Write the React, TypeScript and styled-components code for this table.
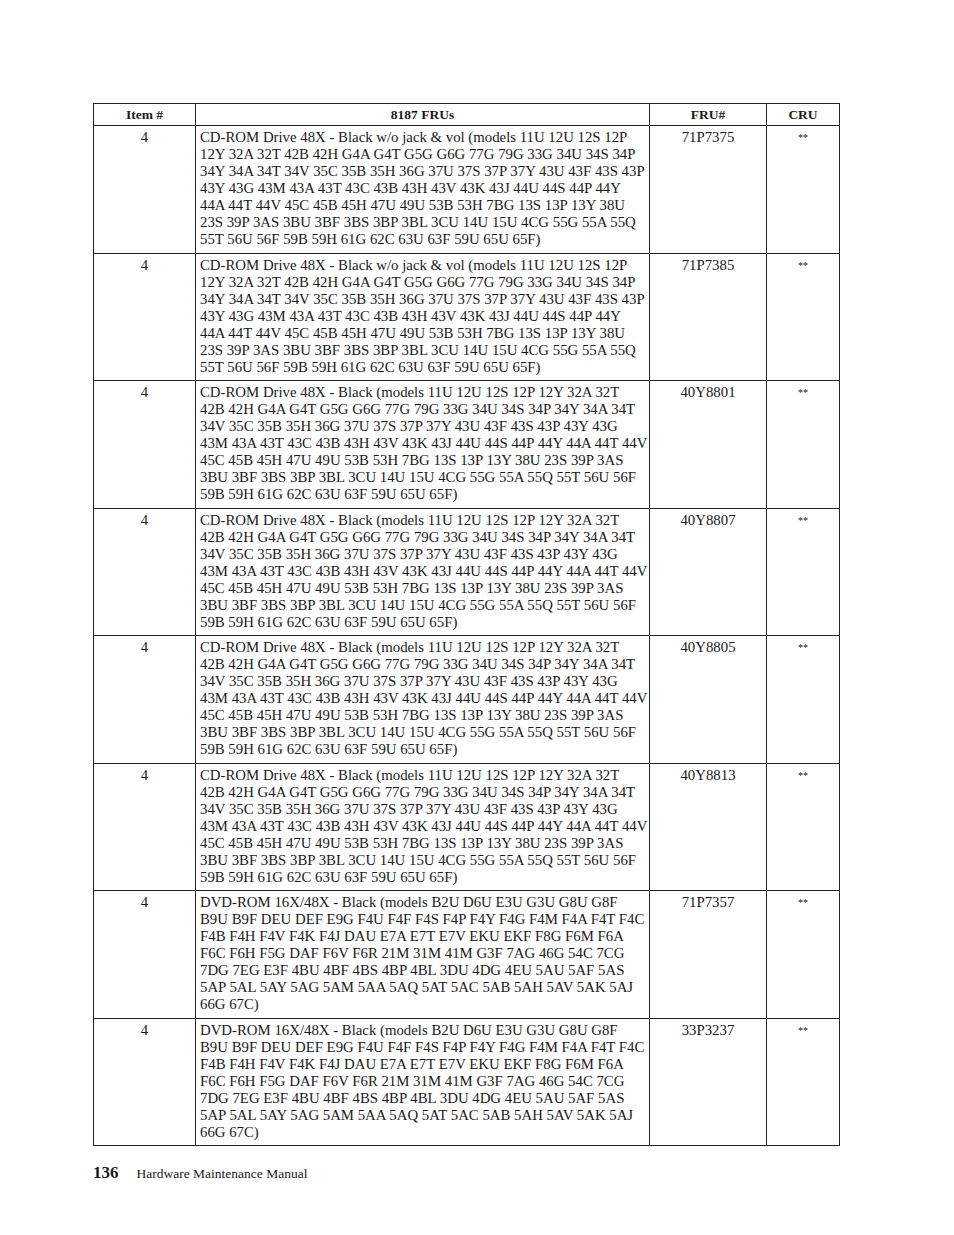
import { FC } from 'react';
import styled, { createGlobalStyle } from 'styled-components';

const GlobalStyle = createGlobalStyle`
  html, body {
    margin: 0;
    padding: 0;
    background: #fff;
  }
  body {
    font-family: "Liberation Serif", "Times New Roman", serif;
    color: #1a1a1a;
  }
`;

const Page = styled.div`
  width: 954px;
  height: 1235px;
  box-sizing: border-box;
  padding: 103px 0 0 93px;
`;

const Table = styled.table`
  border-collapse: collapse;
  table-layout: fixed;
  width: 747px;
`;

const HeadCell = styled.th<{ $w: number }>`
  box-sizing: border-box;
  width: ${(p) => p.$w}px;
  border: 1px solid #222;
  height: 22px;
  padding: 0 4px;
  font-size: 13.5px;
  font-weight: bold;
  text-align: center;
  vertical-align: middle;
  line-height: 16px;
`;

const Cell = styled.td<{ $center?: boolean }>`
  box-sizing: border-box;
  border: 1px solid #222;
  padding: 3px 4px 4.5px 4px;
  vertical-align: top;
  font-size: 14.8px;
  line-height: 17px;
  overflow: hidden;
  text-align: ${(p) => (p.$center ? 'center' : 'left')};
`;

const Line = styled.div`
  white-space: nowrap;
`;

const Stars = styled.span`
  font-size: 10px;
  line-height: 17px;
  vertical-align: top;
`;

const Footer = styled.div`
  display: flex;
  align-items: baseline;
  gap: 18px;
  margin-top: 17px;
`;

const PageNum = styled.span`
  font-size: 17px;
  font-weight: bold;
`;

const Title = styled.span`
  font-size: 13.5px;
`;

const cdA = [
  'CD-ROM Drive 48X - Black w/o jack & vol (models 11U 12U 12S 12P',
  '12Y 32A 32T 42B 42H G4A G4T G5G G6G 77G 79G 33G 34U 34S 34P',
  '34Y 34A 34T 34V 35C 35B 35H 36G 37U 37S 37P 37Y 43U 43F 43S 43P',
  '43Y 43G 43M 43A 43T 43C 43B 43H 43V 43K 43J 44U 44S 44P 44Y',
  '44A 44T 44V 45C 45B 45H 47U 49U 53B 53H 7BG 13S 13P 13Y 38U',
  '23S 39P 3AS 3BU 3BF 3BS 3BP 3BL 3CU 14U 15U 4CG 55G 55A 55Q',
  '55T 56U 56F 59B 59H 61G 62C 63U 63F 59U 65U 65F)',
];

const cdB = [
  'CD-ROM Drive 48X - Black (models 11U 12U 12S 12P 12Y 32A 32T',
  '42B 42H G4A G4T G5G G6G 77G 79G 33G 34U 34S 34P 34Y 34A 34T',
  '34V 35C 35B 35H 36G 37U 37S 37P 37Y 43U 43F 43S 43P 43Y 43G',
  '43M 43A 43T 43C 43B 43H 43V 43K 43J 44U 44S 44P 44Y 44A 44T 44V',
  '45C 45B 45H 47U 49U 53B 53H 7BG 13S 13P 13Y 38U 23S 39P 3AS',
  '3BU 3BF 3BS 3BP 3BL 3CU 14U 15U 4CG 55G 55A 55Q 55T 56U 56F',
  '59B 59H 61G 62C 63U 63F 59U 65U 65F)',
];

const dvd = [
  'DVD-ROM 16X/48X - Black (models B2U D6U E3U G3U G8U G8F',
  'B9U B9F DEU DEF E9G F4U F4F F4S F4P F4Y F4G F4M F4A F4T F4C',
  'F4B F4H F4V F4K F4J DAU E7A E7T E7V EKU EKF F8G F6M F6A',
  'F6C F6H F5G DAF F6V F6R 21M 31M 41M G3F 7AG 46G 54C 7CG',
  '7DG 7EG E3F 4BU 4BF 4BS 4BP 4BL 3DU 4DG 4EU 5AU 5AF 5AS',
  '5AP 5AL 5AY 5AG 5AM 5AA 5AQ 5AT 5AC 5AB 5AH 5AV 5AK 5AJ',
  '66G 67C)',
];

const rows = [
  { lines: cdA, fru: '71P7375' },
  { lines: cdA, fru: '71P7385' },
  { lines: cdB, fru: '40Y8801' },
  { lines: cdB, fru: '40Y8807' },
  { lines: cdB, fru: '40Y8805' },
  { lines: cdB, fru: '40Y8813' },
  { lines: dvd, fru: '71P7357' },
  { lines: dvd, fru: '33P3237' },
];

const App: FC = () => {
  return (
    <Page>
      <GlobalStyle />
      <Table>
        <thead>
          <tr>
            <HeadCell $w={102}>Item #</HeadCell>
            <HeadCell $w={454}>8187 FRUs</HeadCell>
            <HeadCell $w={117}>FRU#</HeadCell>
            <HeadCell $w={73}>CRU</HeadCell>
          </tr>
        </thead>
        <tbody>
          {rows.map((r) => (
            <tr key={r.fru}>
              <Cell $center>4</Cell>
              <Cell>
                {r.lines.map((l, i) => (
                  <Line key={i}>{l}</Line>
                ))}
              </Cell>
              <Cell $center>{r.fru}</Cell>
              <Cell $center>
                <Stars>**</Stars>
              </Cell>
            </tr>
          ))}
        </tbody>
      </Table>
      <Footer>
        <PageNum>136</PageNum>
        <Title>Hardware Maintenance Manual</Title>
      </Footer>
    </Page>
  );
};

export default App;
